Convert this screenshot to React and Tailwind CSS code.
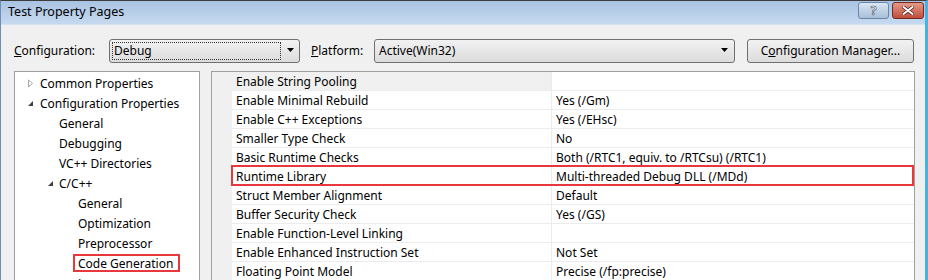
import React from "react";

const font = { fontFamily: '"Noto Sans", "Liberation Sans", sans-serif' };

function Arrow() {
  return (
    <svg width="8" height="5" viewBox="0 0 8 5" className="shrink-0">
      <path d="M0 0 H7 L3.5 4 Z" fill="#000" />
    </svg>
  );
}

function TriOpen() {
  return (
    <svg width="7" height="9" viewBox="0 0 7 9">
      <path d="M1.5 1 L5.5 4.5 L1.5 8 Z" fill="none" stroke="#a6a6a6" strokeWidth="1" />
    </svg>
  );
}

function TriExpanded() {
  return (
    <svg width="7" height="7" viewBox="0 0 7 7">
      <path d="M6 1 L6 6 L1 6 Z" fill="#404040" />
    </svg>
  );
}

const rows = [
  ["Enable String Pooling", ""],
  ["Enable Minimal Rebuild", "Yes (/Gm)"],
  ["Enable C++ Exceptions", "Yes (/EHsc)"],
  ["Smaller Type Check", "No"],
  ["Basic Runtime Checks", "Both (/RTC1, equiv. to /RTCsu) (/RTC1)"],
  ["Runtime Library", "Multi-threaded Debug DLL (/MDd)"],
  ["Struct Member Alignment", "Default"],
  ["Buffer Security Check", "Yes (/GS)"],
  ["Enable Function-Level Linking", ""],
  ["Enable Enhanced Instruction Set", "Not Set"],
  ["Floating Point Model", "Precise (/fp:precise)"],
];

export default function App() {
  return (
    <div
      className="w-[928px] h-[280px] overflow-hidden bg-[#f0f0f0] text-[12px] text-black border-t border-t-[#3c3c3c] border-l border-l-[#6e8db3] border-r-[3px] border-r-[#41b6e6] flex flex-col"
      style={font}
    >
      {/* title bar */}
      <div className="h-[24px] shrink-0 flex items-center bg-gradient-to-b from-[#a9c3e2] to-[#c6d9ef] pl-[7px] pr-[1px] border-b border-b-[#d6e2f0]">
        <span className="text-[12.5px] leading-none">Test Property Pages</span>
        <div className="ml-auto flex gap-[3px] -mt-[4px]">
          <div className="w-[31px] h-[17px] rounded-[3px] border border-[#6d87a8] bg-gradient-to-b from-[#d9e6f4] to-[#a9bfd8] flex items-center justify-center">
            <span className="text-[12px] font-bold leading-none text-white" style={{ WebkitTextStroke: "0.6px #3b4b60" }}>?</span>
          </div>
          <div className="w-[32px] h-[17px] rounded-[3px] border border-[#7b2a22] bg-gradient-to-b from-[#e29a8a] to-[#c14c3b] flex items-center justify-center">
            <svg width="12" height="9" viewBox="0 0 12 9">
              <path d="M1.5 1 L10.5 8 M10.5 1 L1.5 8" stroke="#4a1a14" strokeWidth="3.4" strokeLinecap="round" />
              <path d="M1.5 1 L10.5 8 M10.5 1 L1.5 8" stroke="#fff" strokeWidth="2" strokeLinecap="round" />
            </svg>
          </div>
        </div>
      </div>

      {/* toolbar */}
      <div className="flex items-center h-[24px] mt-[13px] shrink-0 pt-[1px]">
        <span className="ml-[13px] w-[95px]"><u>C</u>onfiguration:</span>
        <div className="w-[191px] h-[24px] rounded-[3px] border border-[#707070] bg-gradient-to-b from-[#f2f2f2] to-[#dcdcdc] flex items-center pl-[2px] pr-[4px]">
          <div className="flex-1 h-[18px] border border-dotted border-[#333] flex items-center pl-[1px]">
            Debug
          </div>
          <div className="ml-[6px]"><Arrow /></div>
        </div>
        <span className="ml-[11px] w-[63px]"><u>P</u>latform:</span>
        <div className="w-[361px] h-[24px] rounded-[3px] border border-[#707070] bg-gradient-to-b from-[#f2f2f2] to-[#dcdcdc] flex items-center pl-[4px] pr-[5px]">
          <span className="flex-1">Active(Win32)</span>
          <Arrow />
        </div>
        <div className="ml-[12px] w-[167px] h-[24px] rounded-[3px] border border-[#707070] bg-gradient-to-b from-[#f2f2f2] to-[#dcdcdc] flex items-center justify-center">
          C<u>o</u>nfiguration Manager...
        </div>
      </div>

      {/* panels */}
      <div className="flex mt-[9px] flex-1 min-h-0">
        {/* tree */}
        <div className="ml-[13px] w-[186px] border border-[#a0a0a0] bg-white shrink-0 h-[240px] pt-[1px]">
          <div className="flex items-center h-[20px] pt-[1px]">
            <span className="ml-[12px] w-[13px] flex"><TriOpen /></span>
            <span>Common Properties</span>
          </div>
          <div className="flex items-center h-[20px] pt-[1px]">
            <span className="ml-[12px] w-[13px] flex"><TriExpanded /></span>
            <span>Configuration Properties</span>
          </div>
          <div className="flex items-center h-[20px] pt-[1px] pl-[44px]">General</div>
          <div className="flex items-center h-[20px] pt-[1px] pl-[44px]">Debugging</div>
          <div className="flex items-center h-[20px] pt-[1px] pl-[44px]">VC++ Directories</div>
          <div className="flex items-center h-[20px] pt-[1px]">
            <span className="ml-[32px] w-[12px] flex"><TriExpanded /></span>
            <span>C/C++</span>
          </div>
          <div className="flex items-center h-[20px] pt-[1px] pl-[63px]">General</div>
          <div className="flex items-center h-[20px] pt-[1px] pl-[63px]">Optimization</div>
          <div className="flex items-center h-[20px] pt-[1px] pl-[63px]">Preprocessor</div>
          <div className="flex items-center h-[20px] pl-[58px]">
            <span className="border-2 border-[#e8383d] px-[3px] h-[18px] flex items-center pt-[1px] pr-[5px]">Code Generation</span>
          </div>
          <div className="flex items-center h-[20px] pt-[1px] pl-[63px]">Language</div>
        </div>

        {/* grid */}
        <div className="ml-[11px] w-[704px] border border-[#a0a0a0] bg-[#f0f0f0] shrink-0 h-[240px]">
          {rows.map(([name, value], i) => (
            <div key={name} className="flex h-[19px]">
              <div className="w-[20px] shrink-0" />
              <div className="relative flex flex-1 border-b border-b-[#ececec]">
                <div className={`w-[319px] shrink-0 flex items-center pl-[4px] pt-[2px] ${i === 0 ? "bg-[#f0f0f0]" : "bg-white"}`}>
                  {name}
                </div>
                <div className="flex-1 flex items-center pl-[4px] pt-[2px] bg-white border-l border-l-[#ececec]">
                  {value}
                </div>
                {name === "Runtime Library" && (
                  <div className="absolute left-[-1px] right-[0px] top-[-2px] bottom-[-1px] border-2 border-[#e8383d]" />
                )}
              </div>
            </div>
          ))}
        </div>
      </div>
    </div>
  );
}
